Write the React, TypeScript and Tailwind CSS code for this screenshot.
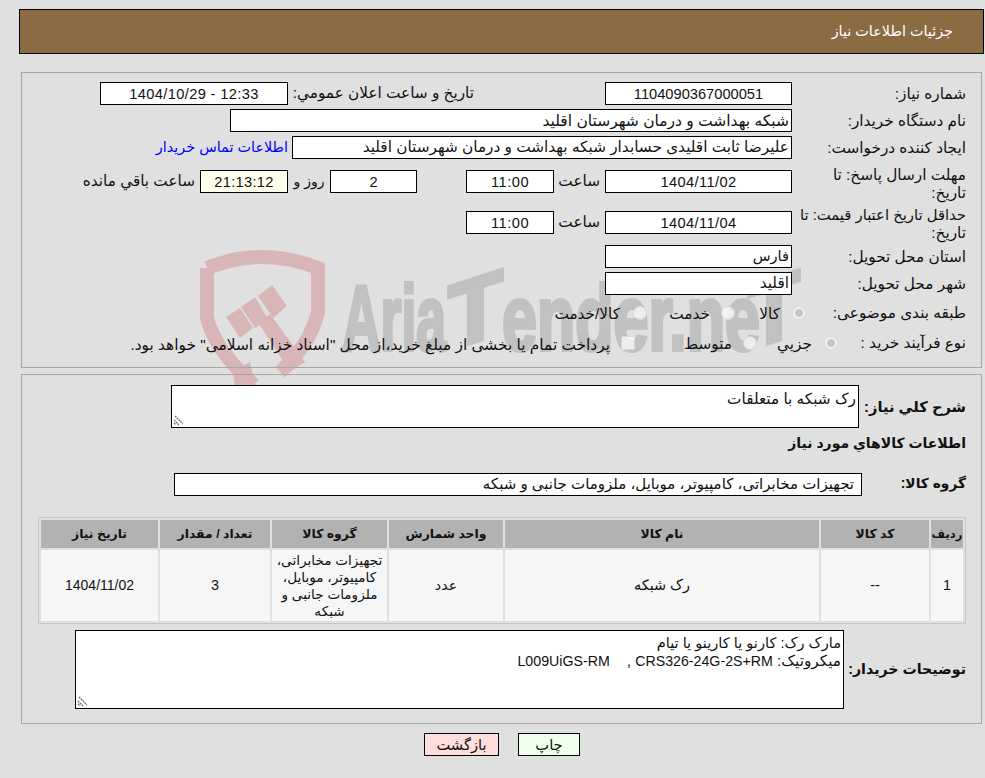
import React from 'react';

const Box: React.FC<{ className?: string; children?: React.ReactNode }> = ({ className = '', children }) => (
  <div className={`h-[23px] shrink-0 border border-black bg-white flex items-center justify-center ${className}`}>
    {children}
  </div>
);

const Label: React.FC<{ children: React.ReactNode }> = ({ children }) => (
  <div className="w-[174px] shrink-0 whitespace-nowrap leading-[18px] text-right">{children}</div>
);

const Radio: React.FC<{ checked?: boolean; className?: string }> = ({ checked, className = '' }) => (
  <span className={`h-[14px] w-[14px] shrink-0 rounded-full border border-[#d6d6d6] bg-white/70 flex items-center justify-center ${className}`}>
    {checked && <span className="h-[8px] w-[8px] rounded-full bg-[#c4c4c4]" />}
  </span>
);

const Grip = () => (
  <svg className="absolute bottom-[1px] left-[1px] h-[11px] w-[11px]" viewBox="0 0 11 11">
    <path d="M2 1l8 8M1 5l5 5M1 8l2 2" stroke="#666" strokeWidth="1.2" strokeDasharray="2 0.6" fill="none" />
  </svg>
);

const Watermark = () => (
  <svg dir="ltr" className="absolute left-[190px] top-[240px] h-[150px] w-[630px]" viewBox="190 240 630 150">
    {/* shield */}
    <path
      d="M207 268Q262 246 318 268V312Q310 345 280 372M207 268V318Q215 350 254 385"
      fill="none"
      stroke="#d8b6b8"
      strokeWidth="14"
    />
    <path d="M272 285L287 306L273 318L258 296ZM255 297L268 319L255 328L241 307ZM240 308L253 328L240 338L226 317Z" fill="#d8b6b8" />
    <path d="M258 322L270 314L305 362L290 372Z" fill="#d8b6b8" />
    <path d="M233 372L250 362L256 388L235 388Z" fill="#d8b6b8" />
    {/* logo lettering */}
    <g
      fill="#c1c1c1"
      stroke="#c1c1c1"
      strokeWidth="4"
      fontFamily="'Liberation Sans', sans-serif"
      fontWeight="700"
      fontSize="92"
      direction="ltr"
    >
      <text x="342" y="350" textLength="104" lengthAdjust="spacingAndGlyphs">Aria</text>
      <text x="448" y="350" textLength="55" lengthAdjust="spacingAndGlyphs" transform="translate(0 146) skewY(-18)">T</text>
      <text x="502" y="350" textLength="258" lengthAdjust="spacingAndGlyphs">ender.ne</text>
      <text x="748" y="350" textLength="52" lengthAdjust="spacingAndGlyphs" transform="translate(0 243) skewY(-18)">T</text>
    </g>
  </svg>
);

const columns = [
  { title: 'ردیف', width: 'w-[32px] text-[11.6px]' },
  { title: 'کد کالا', width: 'w-[108px] text-[12.4px]' },
  { title: 'نام کالا', width: 'w-[314px] text-[12.4px]' },
  { title: 'واحد شمارش', width: 'w-[114px] text-[12.4px]' },
  { title: 'گروه کالا', width: 'w-[115px] text-[12.4px]' },
  { title: 'تعداد / مقدار', width: 'w-[110px] text-[12.4px]' },
  { title: 'تاریخ نیاز', width: 'w-[117px] text-[12.4px]' },
];

export default function App() {
  return (
    <div
      dir="rtl"
      className="relative h-[778px] w-[985px] overflow-hidden bg-[#e0e0e0] pt-[9px] text-[15.3px] text-[#111] font-['Liberation_Sans','DejaVu_Sans',sans-serif]"
    >
      <Watermark />

      {/* header */}
      <div className="relative mr-[1px] ml-[19px] flex h-[45px] items-center border border-black bg-[#8b6c42] pr-[30px] text-[14.4px] text-white">
        جزئیات اطلاعات نیاز
      </div>

      {/* main details */}
      <div className="relative mt-[18px] mr-[3px] ml-[21px] h-[296px] border border-[#a6a6a6] pr-[15px] pt-[9px]">
        <div className="flex items-center">
          <Label>شماره نیاز:</Label>
          <Box className="w-[187px] text-[14.67px]">1104090367000051</Box>
          <div className="mr-[131px] w-[186px] shrink-0 whitespace-nowrap">تاریخ و ساعت اعلان عمومي:</div>
          <Box className="w-[188px] text-[14.67px] tracking-[0.35px]">
            <span dir="ltr">1404/10/29 - 12:33</span>
          </Box>
        </div>
        <div className="mt-[4px] flex items-center">
          <Label>نام دستگاه خریدار:</Label>
          <Box className="w-[562px] !justify-start pr-[2px] text-[15.5px]">شبکه بهداشت و درمان شهرستان اقلید</Box>
        </div>
        <div className="mt-[4px] flex items-center">
          <Label>ایجاد کننده درخواست:</Label>
          <Box className="w-[500px] !justify-start pr-[2px]">علیرضا ثابت اقلیدی حسابدار شبکه بهداشت و درمان شهرستان اقلید</Box>
          <a className="mr-[4px] text-[14.4px] text-[#0000ff]">اطلاعات تماس خریدار</a>
        </div>
        <div className="mt-[7px] flex items-start">
          <Label>
            مهلت ارسال پاسخ: تا
            <br />
            تاریخ:
          </Label>
          <Box className="mt-[4px] w-[187px] text-[14.67px] tracking-[0.4px]">1404/11/02</Box>
          <div className="mt-[4px] flex h-[23px] w-[51px] shrink-0 items-center pr-[5px]">ساعت</div>
          <Box className="mt-[4px] w-[88px] text-[14.67px] tracking-[0.5px]">11:00</Box>
          <Box className="mt-[4px] mr-[49px] w-[87px] text-[14.67px]">2</Box>
          <div className="mt-[4px] flex h-[23px] w-[42px] shrink-0 items-center justify-center text-[14px]">روز و</div>
          <Box className="mt-[4px] w-[88px] !bg-[#ffffee] text-[14.67px] tracking-[0.3px]">21:13:12</Box>
          <div className="mt-[4px] flex h-[23px] items-center whitespace-nowrap pr-[5px]">ساعت باقي مانده</div>
        </div>
        <div className="mt-[4px] flex items-start">
          <Label>
            <span className="text-[14.8px]">حداقل تاریخ اعتبار قیمت: تا</span>
            <br />
            تاریخ:
          </Label>
          <Box className="mt-[5px] w-[187px] text-[14.67px] tracking-[0.4px]">1404/11/04</Box>
          <div className="mt-[5px] flex h-[23px] w-[51px] shrink-0 items-center pr-[5px]">ساعت</div>
          <Box className="mt-[5px] w-[88px] text-[14.67px] tracking-[0.5px]">11:00</Box>
        </div>
        <div className="mt-[3px] flex items-center">
          <Label>استان محل تحویل:</Label>
          <Box className="w-[187px] !justify-start pr-[2px] text-[14.6px]">فارس</Box>
        </div>
        <div className="mt-[4px] flex items-center">
          <Label>شهر محل تحویل:</Label>
          <Box className="w-[187px] !justify-start pr-[2px] text-[15.3px]">اقلید</Box>
        </div>
        <div className="mt-[8px] flex h-[20px] items-center">
          <Label>طبقه بندی موضوعی:</Label>
          <Radio checked className="mr-[-14px]" />
          <span className="mt-[3px] mr-[12px] w-[45px] shrink-0">کالا</span>
          <Radio />
          <span className="mt-[3px] mr-[11px] w-[63px] shrink-0">خدمت</span>
          <Radio />
          <span className="mt-[3px] mr-[13px] whitespace-nowrap">کالا/خدمت</span>
        </div>
        <div className="mt-[10px] flex h-[20px] items-center">
          <div className="w-[128px] shrink-0 whitespace-nowrap">نوع فرآیند خرید :</div>
          <Radio checked />
          <span className="mt-[3px] mr-[12px] w-[55px] shrink-0">جزيي</span>
          <Radio />
          <span className="mt-[3px] mr-[11px] w-[97px] shrink-0">متوسط</span>
          <span className="h-[14px] w-[14px] shrink-0 rounded-[2px] border border-[#d6d6d6] bg-white/70" />
          <span className="mt-[3px] mr-[11px] whitespace-nowrap text-[15.4px]">پرداخت تمام یا بخشی از مبلغ خرید،از محل "اسناد خزانه اسلامی" خواهد بود.</span>
        </div>
      </div>

      {/* goods */}
      <div className="relative mt-[6px] mr-[3px] ml-[21px] h-[350px] border border-[#a6a6a6] pr-[15px] pt-[10px] text-[14.2px]">
        <div className="flex items-center">
          <div className="w-[107px] shrink-0 whitespace-nowrap text-[14.67px] font-bold">شرح کلي نیاز:</div>
          <div className="relative h-[43px] w-[688px] border border-black bg-white pr-[2px] pt-[2px] text-[15.3px]">
            رک شبکه با متعلقات
            <Grip />
          </div>
        </div>
        <div className="mt-[6px] h-[18px] text-[14px] font-bold leading-[18px]">اطلاعات کالاهاي مورد نیاز</div>
        <div className="mt-[21px] flex items-center">
          <div className="w-[104px] shrink-0 whitespace-nowrap text-[13.8px] font-bold">گروه کالا:</div>
          <Box className="w-[688px] !justify-start pr-[7px] text-[15px]">تجهیزات مخابراتی، کامپیوتر، موبایل، ملزومات جانبی و شبکه</Box>
        </div>
        <table className="mt-[21px] w-[928px] table-fixed border-separate border-spacing-[2px] border border-[#c6c6c6] text-center">
          <thead>
            <tr>
              {columns.map((col) => (
                <th key={col.title} className={`h-[28px] bg-[#b2b2b2] p-0 font-bold ${col.width}`}>
                  {col.title}
                </th>
              ))}
            </tr>
          </thead>
          <tbody>
            <tr className="text-[14.4px]">
              <td className="h-[71px] bg-[#f6f6f6] p-0">1</td>
              <td className="bg-[#f6f6f6] p-0">--</td>
              <td className="bg-[#f6f6f6] p-0">رک شبکه</td>
              <td className="bg-[#f6f6f6] p-0">عدد</td>
              <td className="whitespace-nowrap bg-[#f6f6f6] p-0 text-[13.6px] leading-[17px]">
                تجهیزات مخابراتی،
                <br />
                کامپیوتر، موبایل،
                <br />
                ملزومات جانبی و
                <br />
                شبکه
              </td>
              <td className="bg-[#f6f6f6] p-0">3</td>
              <td className="bg-[#f6f6f6] p-0 text-[14px]">1404/11/02</td>
            </tr>
          </tbody>
        </table>
        <div className="mt-[6px] flex items-center">
          <div className="w-[122px] shrink-0 whitespace-nowrap font-bold">توضیحات خریدار:</div>
          <div className="relative h-[79px] w-[769px] border border-black bg-white pr-[2px] pt-[4px] text-[15.3px] leading-[17px]">
            <div className="text-[14.6px]">مارک رک: کارنو یا کارینو یا تیام</div>
            <div>
              میکروتیک: <span className="text-[14.2px]">CRS326-24G-2S+RM</span>
              {'\u200F'}&nbsp;,{'\u200F'}&nbsp;&nbsp;&nbsp;&nbsp;<span className="text-[14.2px]">L009UiGS-RM</span>
            </div>
            <Grip />
          </div>
        </div>
      </div>

      {/* actions */}
      <div className="relative mt-[9px] flex text-[14.67px]">
        <div className="mr-[405px] flex h-[23px] w-[62px] items-center justify-center border border-black bg-[#eeffee]">چاپ</div>
        <div className="mr-[19px] flex h-[23px] w-[75px] items-center justify-center border border-black bg-[#ffdddd]">بازگشت</div>
      </div>
    </div>
  );
}
